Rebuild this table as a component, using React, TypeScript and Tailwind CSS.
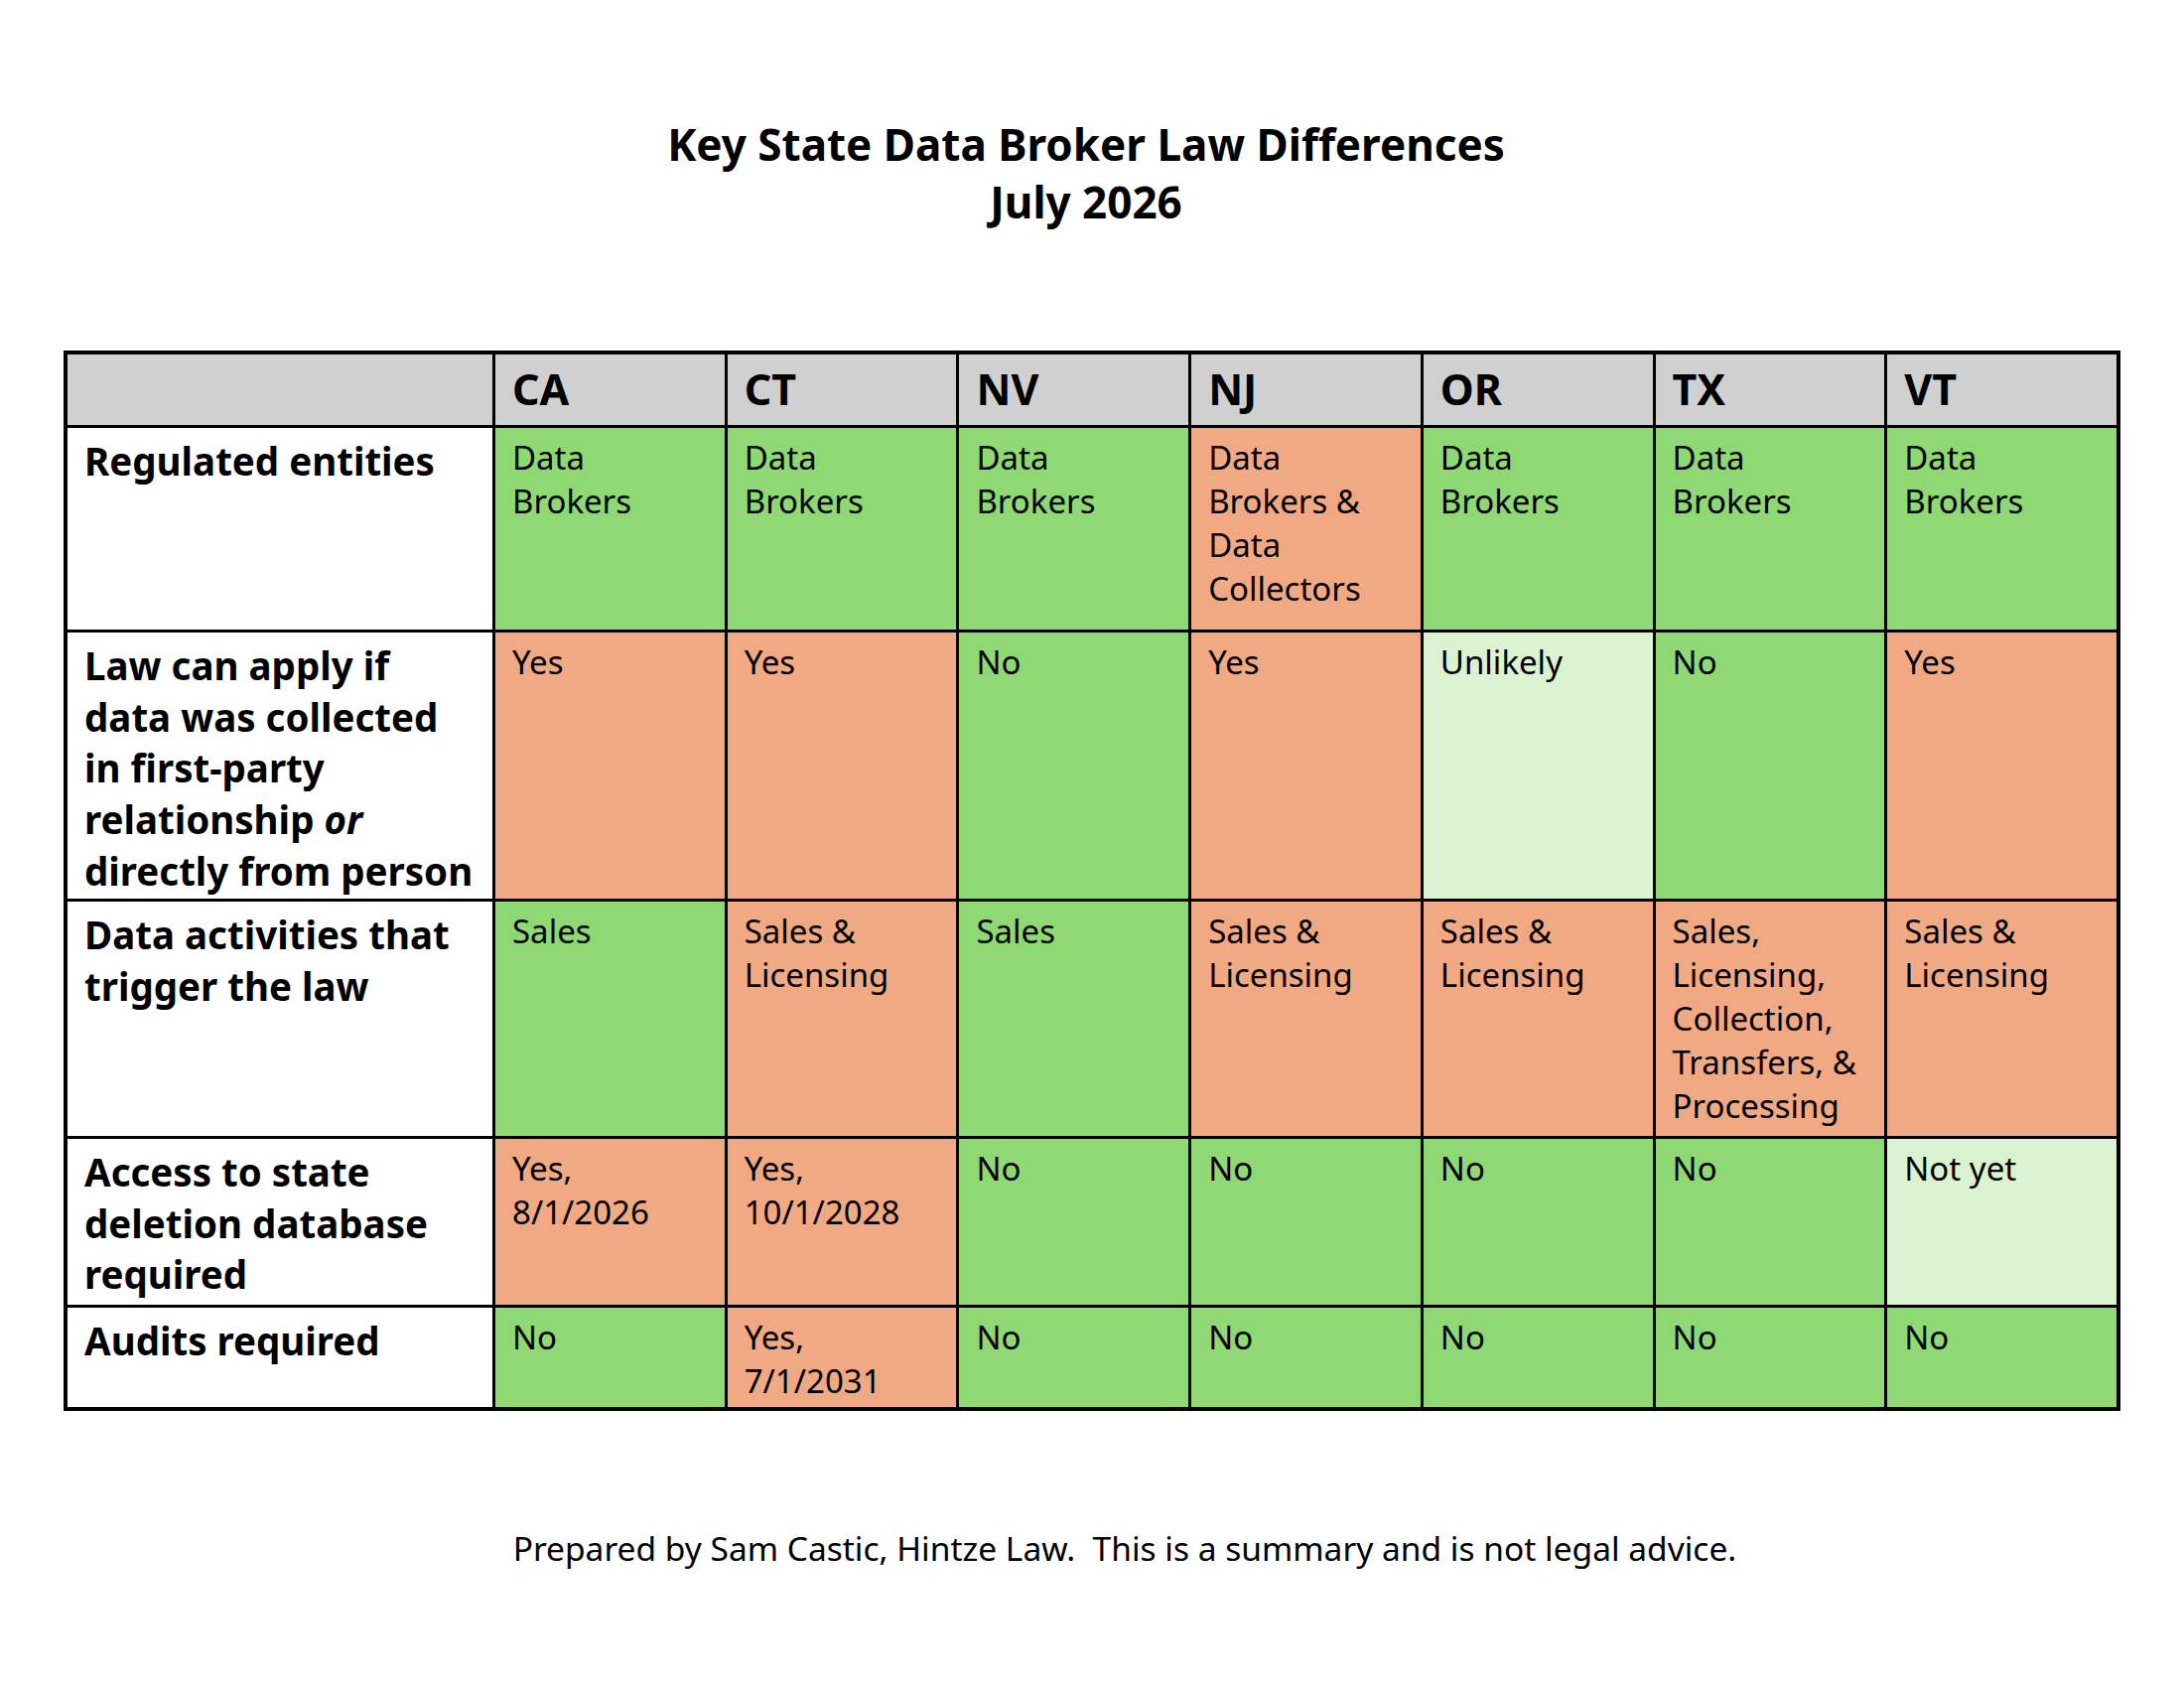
import React from "react";

type Tone = "g" | "s" | "l";

const toneClass: Record<Tone, string> = {
  g: "bg-[#8ed973]",
  s: "bg-[#f1a983]",
  l: "bg-[#daf2d0]",
};

const states = ["CA", "CT", "NV", "NJ", "OR", "TX", "VT"];

const rows: { label: React.ReactNode[]; cells: [Tone, string[]][] }[] = [
  {
    label: ["Regulated entities"],
    cells: [
      ["g", ["Data", "Brokers"]],
      ["g", ["Data", "Brokers"]],
      ["g", ["Data", "Brokers"]],
      ["s", ["Data", "Brokers &", "Data", "Collectors"]],
      ["g", ["Data", "Brokers"]],
      ["g", ["Data", "Brokers"]],
      ["g", ["Data", "Brokers"]],
    ],
  },
  {
    label: [
      "Law can apply if",
      "data was collected",
      "in first-party",
      <>
        relationship <i>or</i>
      </>,
      "directly from person",
    ],
    cells: [
      ["s", ["Yes"]],
      ["s", ["Yes"]],
      ["g", ["No"]],
      ["s", ["Yes"]],
      ["l", ["Unlikely"]],
      ["g", ["No"]],
      ["s", ["Yes"]],
    ],
  },
  {
    label: ["Data activities that", "trigger the law"],
    cells: [
      ["g", ["Sales"]],
      ["s", ["Sales &", "Licensing"]],
      ["g", ["Sales"]],
      ["s", ["Sales &", "Licensing"]],
      ["s", ["Sales &", "Licensing"]],
      ["s", ["Sales,", "Licensing,", "Collection,", "Transfers, &", "Processing"]],
      ["s", ["Sales &", "Licensing"]],
    ],
  },
  {
    label: ["Access to state", "deletion database", "required"],
    cells: [
      ["s", ["Yes,", "8/1/2026"]],
      ["s", ["Yes,", "10/1/2028"]],
      ["g", ["No"]],
      ["g", ["No"]],
      ["g", ["No"]],
      ["g", ["No"]],
      ["l", ["Not yet"]],
    ],
  },
  {
    label: ["Audits required"],
    cells: [
      ["g", ["No"]],
      ["s", ["Yes,", "7/1/2031"]],
      ["g", ["No"]],
      ["g", ["No"]],
      ["g", ["No"]],
      ["g", ["No"]],
      ["g", ["No"]],
    ],
  },
];

export default function App() {
  return (
    <div className="w-[2200px] h-[1700px] bg-white text-black font-['Noto_Sans',sans-serif] flex flex-col">
      <div className="pt-[117px] pr-[12px] text-center font-bold text-[44px] leading-[57.5px]">
        <div>Key State Data Broker Law Differences</div>
        <div>July 2026</div>
      </div>

      <div className="mt-[121px] ml-[64px] w-[2072px] bg-black p-[4px] gap-[3px] grid grid-cols-[428px_repeat(7,1fr)] grid-rows-[71px_203px_268px_236px_167px_100px]">
        <div className="bg-[#d0d0d0]" />
        {states.map((s) => (
          <div key={s} className="bg-[#d0d0d0] pl-[17px] pt-[5px] font-bold text-[43px] leading-[59px]">
            {s}
          </div>
        ))}
        {rows.map((r, ri) => (
          <React.Fragment key={ri}>
            <div className="bg-white pl-[17px] pt-[8px] font-bold text-[38.5px] leading-[51.7px] whitespace-nowrap">
              {r.label.map((l, i) => (
                <div key={i}>{l}</div>
              ))}
            </div>
            {r.cells.map(([tone, lines], ci) => (
              <div
                key={ci}
                className={`${toneClass[tone]} pl-[17px] pt-[8px] text-[33px] leading-[44px] whitespace-nowrap`}
              >
                {lines.map((l, i) => (
                  <div key={i}>{l}</div>
                ))}
              </div>
            ))}
          </React.Fragment>
        ))}
      </div>

      <div className="mt-[115px] pl-[66px] text-center text-[33.5px] leading-[46px]">
        Prepared by Sam Castic, Hintze Law.{"\u00a0\u00a0"}This is a summary and is not legal advice.
      </div>
    </div>
  );
}
